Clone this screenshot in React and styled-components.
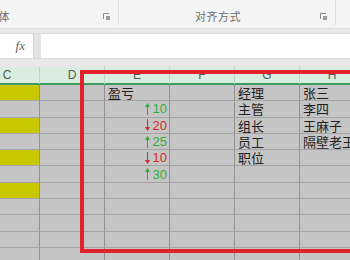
import React from 'react'
import styled, {createGlobalStyle} from 'styled-components'

const GlobalStyle = createGlobalStyle`
  html, body {
    margin: 0;
    padding: 0;
    width: 350px;
    height: 260px;
    overflow: hidden;
    background: #e8e8e8;
    font-family: "Noto Sans CJK SC", "Noto Sans", sans-serif;
  }
`

const Ribbon = styled.div`
  display: flex;
  height: 28px;
  background: #f4f4f4;
  border-bottom: 1px solid #dcdcdc;
  margin-left: -13px;
`
const Group = styled.div`
  position: relative;
  flex-shrink: 0;
  display: flex;
  align-items: flex-start;
  justify-content: ${p => p.center ? 'center' : 'flex-start'};
  width: ${p => p.width}px;
  height: 25px;
  border-right: 1px solid #dcdcdc;
  padding-top: 9px;
  padding-right: ${p => p.center ? '18px' : '0'};
  box-sizing: border-box;
  font-size: 11px;
  line-height: 14px;
  color: #6e6e6e;
  letter-spacing: 0.5px;
`
const Launcher = styled.svg`
  position: absolute;
  right: 8px;
  top: 13px;
`
const Band = styled.div`
  height: ${p => p.h}px;
  background: #e8e8e8;
`
const FormulaBar = styled.div`
  display: flex;
  height: 24px;
  background: #ffffff;
  border-top: 1px solid #dadada;
  border-bottom: 1px solid #dadada;
`
const FxBox = styled.div`
  width: 33px;
  display: flex;
  align-items: center;
  justify-content: flex-end;
  padding-right: 8px;
  box-sizing: border-box;
  font-family: "Liberation Serif", serif;
  font-style: italic;
  font-size: 13px;
  color: #606060;
`
const Splitter = styled.div`
  width: 7px;
  background: #e4e4e4;
  border-left: 1px solid #d4d4d4;
`
const Input = styled.div`
  flex: 1;
`
const Sheet = styled.div`
  position: relative;
  margin-left: -25px;
`
const HeaderRow = styled.div`
  display: grid;
  grid-template-columns: repeat(6, 65px);
  height: 16px;
  background: #d9eee1;
  border-bottom: 2px solid #3f9b62;
`
const HeaderCell = styled.div`
  border-right: 1px solid #b9d6c3;
  text-align: center;
  font-family: "Liberation Sans", Arial, sans-serif;
  font-size: 12px;
  line-height: 17px;
  color: #4e5e55;
`
const Row = styled.div`
  display: grid;
  grid-template-columns: repeat(6, 65px);
  height: 16.3px;
`
const Cell = styled.div`
  display: flex;
  align-items: center;
  justify-content: ${p => p.right ? 'flex-end' : 'flex-start'};
  gap: 3px;
  padding: 0 ${p => p.right ? '2px' : '3px'};
  background: ${p => p.yellow ? '#c8c800' : '#c5c5c5'};
  border-right: 1px solid #929292;
  border-bottom: 1px solid #a4a4a4;
  box-sizing: border-box;
  white-space: nowrap;
  overflow: visible;
  font-size: 13px;
  line-height: 15px;
  color: ${p => p.tone === 'up' ? '#2fae3a' : p.tone === 'down' ? '#d12b2b' : '#1e1e1e'};
  font-family: ${p => p.num ? '"Liberation Sans", Arial, sans-serif' : '"Noto Sans CJK SC", sans-serif'};
`
const Frame = styled.div`
  position: absolute;
  left: 105px;
  top: 3px;
  width: 320px;
  height: 183px;
  border: 4px solid #e2232d;
  box-sizing: border-box;
  pointer-events: none;
`

const Arrow = ({up}) => (
  <svg width="5" height="12" viewBox="0 0 5 12">
    {up ? (
      <>
        <polygon points="2.5,0 5,4 0,4" fill="currentColor"/>
        <rect x="2" y="3.5" width="1" height="8.5" fill="currentColor"/>
      </>
    ) : (
      <>
        <polygon points="2.5,12 5,8 0,8" fill="currentColor"/>
        <rect x="2" y="0" width="1" height="8.5" fill="currentColor"/>
      </>
    )}
  </svg>
)

const LauncherIcon = () => (
  <Launcher width="7" height="7" viewBox="0 0 7 7">
    <path d="M0.5 6 V0.5 H6" stroke="#8a8a8a" fill="none"/>
    <rect x="3" y="3" width="4" height="4" fill="#9a9a9a"/>
  </Launcher>
)

const columns = ['C', 'D', 'E', 'F', 'G', 'H']

const rows = [
  {label: '盈亏', role: '经理', name: '张三'},
  {value: '10', up: true, role: '主管', name: '李四'},
  {value: '20', up: false, role: '组长', name: '王麻子'},
  {value: '25', up: true, role: '员工', name: '隔壁老王'},
  {value: '10', up: false, role: '职位'},
  {value: '30', up: true},
  {}, {}, {}, {}, {}
]

function App() {
  return (
    <>
      <GlobalStyle/>
      <Ribbon>
        <Group width={132}>字体<LauncherIcon/></Group>
        <Group width={217} center>对齐方式<LauncherIcon/></Group>
        <Group width={40}/>
      </Ribbon>
      <Band h={4}/>
      <FormulaBar>
        <FxBox>fx</FxBox>
        <Splitter/>
        <Input/>
      </FormulaBar>
      <Band h={8}/>
      <Sheet>
        <HeaderRow>
          {columns.map(c => <HeaderCell key={c}>{c}</HeaderCell>)}
        </HeaderRow>
        {rows.map((r, i) => (
          <Row key={i}>
            <Cell yellow={i % 2 === 0 && i < 8}/>
            <Cell/>
            {r.value ? (
              <Cell right num tone={r.up ? 'up' : 'down'}>
                <Arrow up={r.up}/>{r.value}
              </Cell>
            ) : (
              <Cell>{r.label}</Cell>
            )}
            <Cell/>
            <Cell>{r.role}</Cell>
            <Cell>{r.name}</Cell>
          </Row>
        ))}
        <Frame/>
      </Sheet>
    </>
  )
}

export default App
